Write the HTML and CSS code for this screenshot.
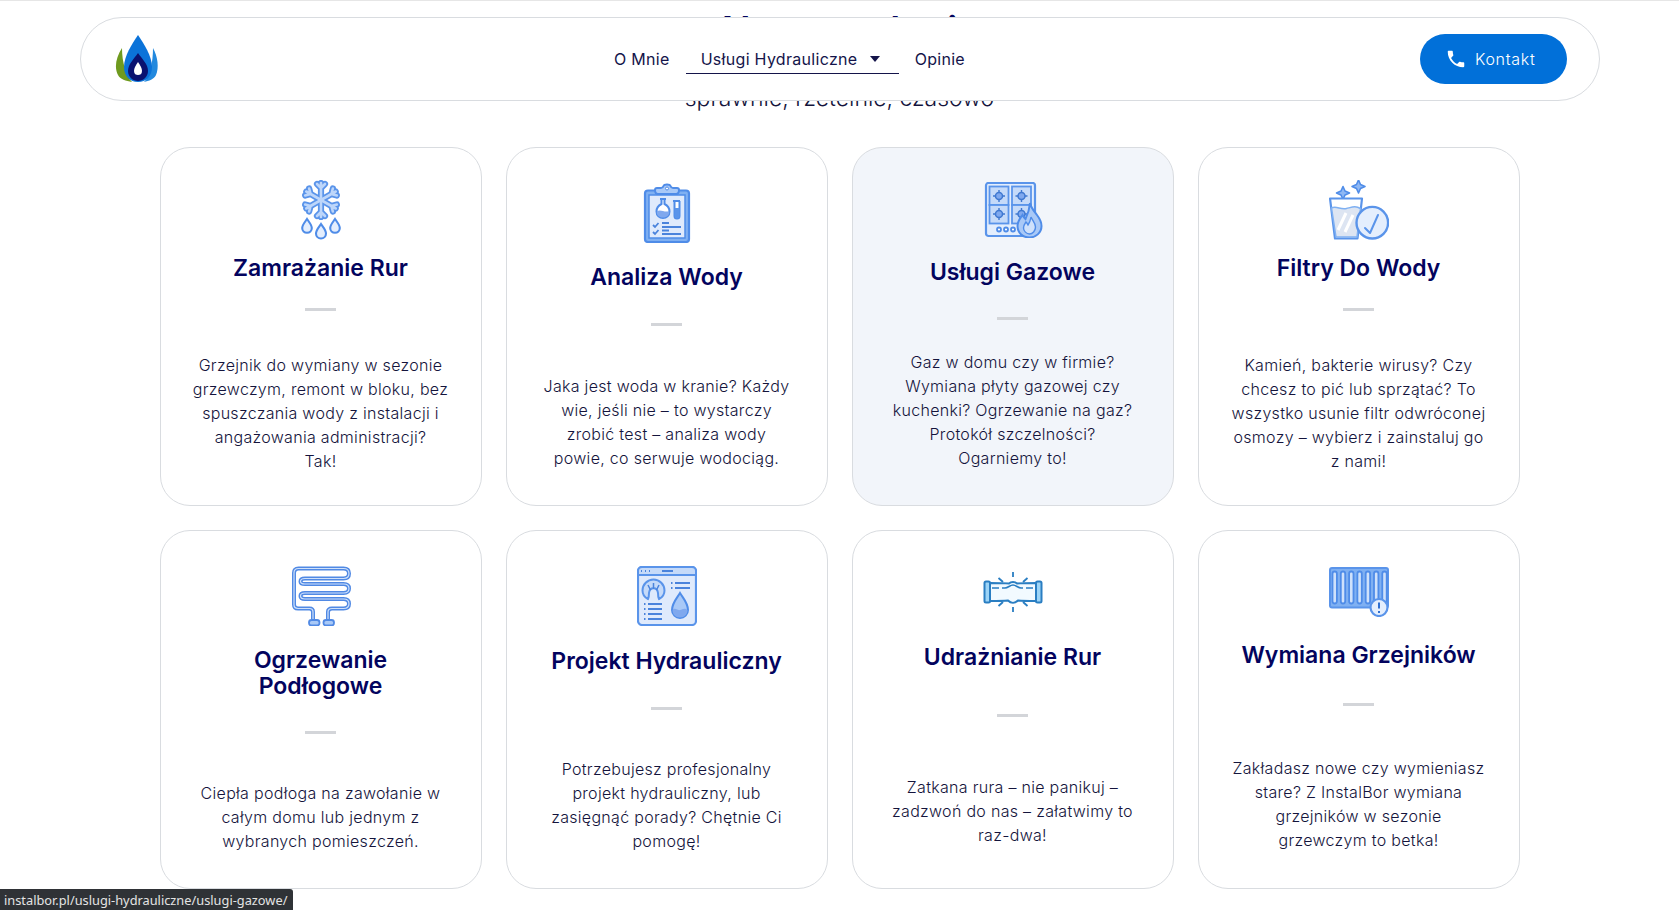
FILE: index.html
```html
<!DOCTYPE html>
<html lang="pl">
<head>
<meta charset="utf-8">
<title>Usługi Hydrauliczne</title>
<link rel="stylesheet" href="styles.css">
</head>
<body>
<header class="nav">
  <a class="logo" href="#" aria-label="InstalBor">
    <svg width="44" height="48" viewBox="-2 0 44 48">
      <path d="M5 13C-1 22-3 33 1 40c2 4 8 6 14 7-6-6-10-20-10-34z" fill="#6f9a1e"/>
      <path d="M36 13c5 9 6 20 3 27-2 4-7 6-12 7 6-6 9-20 9-34z" fill="#2389de"/>
      <path d="M21 0C15 9 7 21 7 32c0 9 6 15 14 15s14-6 14-15C35 21 27 9 21 0z" fill="#0b73d9"/>
      <path d="M21 18c-4 6-10 11-10 18 0 6 5 10 10 10s10-4 10-10c0-7-6-12-10-18z" fill="#0a1270"/>
      <path d="M21 27c-2 3-4 6-4 9 0 3 2 4 4 4s4-1 4-4c0-3-2-6-4-9z" fill="#fff"/>
    </svg>
  </a>
  <nav class="menu">
    <a class="menu-link" href="#">O Mnie</a>
    <a class="menu-link menu-link--open" href="#">Usługi Hydrauliczne<span class="caret"></span></a>
    <a class="menu-link" href="#">Opinie</a>
  </nav>
  <a class="cta" href="#">
    <svg width="22" height="22" viewBox="0 0 24 24"><path fill="#fff" d="M6.62 10.79c1.44 2.83 3.76 5.14 6.59 6.59l2.2-2.2c.27-.27.67-.36 1.02-.24 1.12.37 2.33.57 3.57.57.55 0 1 .45 1 1V20c0 .55-.45 1-1 1-9.39 0-17-7.61-17-17 0-.55.45-1 1-1h3.5c.55 0 1 .45 1 1 0 1.25.2 2.45.57 3.57.11.35.03.74-.25 1.02l-2.2 2.2z"/></svg>
    Kontakt
  </a>
</header>

<main class="page">
  <section class="hero">
    <h1 class="hero-title">Nasze usługi</h1>
    <p class="hero-sub">sprawnie, rzetelnie, czasowo</p>
  </section>

  <section class="grid">
    <article class="card c1">
      <svg class="icon" width="60" height="60" viewBox="0 0 60 60">
        <g fill="none" stroke-linecap="round" stroke-linejoin="round">
          <g stroke="#5a94ea" stroke-width="6.2">
            <path d="M30 20V3M30 8l-4-4M30 8l4-4"/>
            <path d="M30 20V3M30 8l-4-4M30 8l4-4" transform="rotate(60 30 20)"/>
            <path d="M30 20V3M30 8l-4-4M30 8l4-4" transform="rotate(120 30 20)"/>
            <path d="M30 20V3M30 8l-4-4M30 8l4-4" transform="rotate(180 30 20)"/>
            <path d="M30 20V3M30 8l-4-4M30 8l4-4" transform="rotate(240 30 20)"/>
            <path d="M30 20V3M30 8l-4-4M30 8l4-4" transform="rotate(300 30 20)"/>
          </g>
          <g stroke="#bdd6fa" stroke-width="2.6">
            <path d="M30 20V3M30 8l-4-4M30 8l4-4"/>
            <path d="M30 20V3M30 8l-4-4M30 8l4-4" transform="rotate(60 30 20)"/>
            <path d="M30 20V3M30 8l-4-4M30 8l4-4" transform="rotate(120 30 20)"/>
            <path d="M30 20V3M30 8l-4-4M30 8l4-4" transform="rotate(180 30 20)"/>
            <path d="M30 20V3M30 8l-4-4M30 8l4-4" transform="rotate(240 30 20)"/>
            <path d="M30 20V3M30 8l-4-4M30 8l4-4" transform="rotate(300 30 20)"/>
          </g>
        </g>
        <g fill="#e4eefd" stroke="#4f8ce8" stroke-width="2.1">
          <path d="M16 39c-2 3-4.800 6-4.800 9a4.800 4.800 0 0 0 9.600 0c0-3-2.800-6-4.800-9z"/>
          <path d="M30 44c-2 3-5 6-5 9.500a5 5 0 0 0 10 0c0-3.500-3-6.500-5-9.500z"/>
          <path d="M44 39c-2 3-4.800 6-4.800 9a4.800 4.800 0 0 0 9.600 0c0-3-2.800-6-4.800-9z"/>
        </g>
      </svg>
      <h2 class="card-title">Zamrażanie Rur</h2>
      <span class="rule"></span>
      <p class="card-text">Grzejnik do wymiany w sezonie<br>grzewczym, remont w bloku, bez<br>spuszczania wody z instalacji i<br>angażowania administracji?<br>Tak!</p>
    </article>

    <article class="card c2">
      <svg class="icon" width="60" height="60" viewBox="0 0 60 60">
        <rect x="8" y="7.500" width="44" height="51.500" rx="3" fill="#7fb0f2" stroke="#4f8ce8" stroke-width="2.200"/>
        <rect x="12" y="12" width="36" height="43" fill="#dfeafc" stroke="#4f8ce8" stroke-width="1.500"/>
        <path d="M18 7c0-1.500 1-2 2-2h4c1 0 2-.5 2.500-2 .8-2 6.200-2 7 0 .5 1.500 1.500 2 2.500 2h4c1 0 2 .5 2 2 0 2-1 4-3 4H21c-2 0-3-2-3-4z" fill="#a9c9f7" stroke="#4f8ce8" stroke-width="2"/>
        <circle cx="30" cy="5.500" r="1.500" fill="#fff" stroke="#4f8ce8"/>
        <path d="M23 16h6M24.500 16v5c-3 1.500-5 4-5 7.500 0 4 3 6.500 6.500 6.500s6.500-2.500 6.500-6.500c0-3.500-2-6-5-7.500v-5" fill="#fff" stroke="#4f8ce8" stroke-width="2"/>
        <path d="M20 28c4-2 8 2 12 0 1 4-2 6.500-6 6.500s-7-2.500-6-6.500z" fill="#7fa8ee"/>
        <path d="M36 18h7M37.500 18v15a2.500 2.500 0 0 0 5 0V18" fill="#fff" stroke="#4f8ce8" stroke-width="2"/>
        <path d="M37.500 25h5v8a2.500 2.500 0 0 1-5 0z" fill="#5a94ea"/>
        <path d="M16 42l2 2 3.500-4M16 49l2 2 3.500-4M25 40h7M25 44h19M25 47.500h7M25 51h19" fill="none" stroke="#4a83dc" stroke-width="1.800"/>
      </svg>
      <h2 class="card-title">Analiza Wody</h2>
      <span class="rule"></span>
      <p class="card-text">Jaka jest woda w kranie? Każdy<br>wie, jeśli nie – to wystarczy<br>zrobić test – analiza wody<br>powie, co serwuje wodociąg.</p>
    </article>

    <article class="card card--hover c3">
      <svg class="icon" width="60" height="56" viewBox="0 0 60 56">
        <rect x="3" y="1" width="49" height="53" rx="2.500" fill="#e4eefd" stroke="#5a94ea" stroke-width="2.200"/>
        <g fill="#c5daf9" stroke="#5a94ea" stroke-width="1.800">
          <rect x="6.500" y="4.500" width="19" height="18.500"/>
          <rect x="6.500" y="23" width="19" height="18.500"/>
          <rect x="29" y="4.500" width="19" height="18.500"/>
          <rect x="29" y="23" width="19" height="18.500"/>
        </g>
        <path d="M16 8v12M10 14h12M38.500 8v12M32.500 14h12M16 26v12M10 32h12M38.500 26v12M32.500 32h12" stroke="#3f78d0" stroke-width="1.400"/>
        <g fill="#7fa8ee" stroke="#3f78d0" stroke-width="1.500">
          <circle cx="16" cy="14" r="3.500"/>
          <circle cx="38.500" cy="14" r="3.500"/>
          <circle cx="16" cy="32" r="3.500"/>
          <circle cx="38.500" cy="32" r="3.500"/>
        </g>
        <g fill="#fff" stroke="#4f8ce8" stroke-width="1.800">
          <circle cx="16" cy="47.500" r="2"/>
          <circle cx="23" cy="47.500" r="2"/>
          <circle cx="30" cy="47.500" r="2"/>
        </g>
        <path d="M47 21c1 5 4 8 7 12 3 4 4.500 7 4.500 11 0 7-6 11.500-12 11.500-7 0-12-5-12-11.500 0-5 3-8 5-11 1 2 2 3 3 4 2-4 4-10 4.500-16z" fill="#a9c9f7" stroke="#4f8ce8" stroke-width="2"/>
        <path d="M48 35c1 3 4.500 6 4.500 10 0 4-3 7-6 7s-6-3-6-6c0-3 1.500-4.500 2.500-6 1 1 1.500 2 2 3 1.500-2 2.500-5 3-8z" fill="#cfe1fb" stroke="#4f8ce8" stroke-width="1.400"/>
      </svg>
      <h2 class="card-title">Usługi Gazowe</h2>
      <span class="rule"></span>
      <p class="card-text">Gaz w domu czy w firmie?<br>Wymiana płyty gazowej czy<br>kuchenki? Ogrzewanie na gaz?<br>Protokół szczelności?<br>Ogarniemy to!</p>
    </article>

    <article class="card c4">
      <svg class="icon" width="60" height="60" viewBox="0 0 60 60">
        <path d="M14 6.500l2 4.500 4.500 2-4.500 2-2 4.500-2-4.500-4.500-2 4.500-2zM29.500 0l2 4.500 4.500 2-4.500 2-2 4.500-2-4.500-4.500-2 4.500-2z" fill="#8fb8f4" stroke="#4f8ce8" stroke-width="1.600" stroke-linejoin="round"/>
        <path d="M1 18.500h32l-4.500 40H6z" fill="#fff" stroke="#5a94ea" stroke-width="2.200" stroke-linejoin="round"/>
        <path d="M2.500 28c5-2.500 9 2 15 .5s9-3 14 0L28 57H7z" fill="#dde5f2" stroke="#7fb0f2" stroke-width="1.500"/>
        <path d="M9 50l8-17M16 52l8-17" stroke="#fff" stroke-width="3"/>
        <circle cx="43.300" cy="42.700" r="15.800" fill="#e4eefd" stroke="#5a94ea" stroke-width="2.400"/>
        <path d="M36 48l5 5 8-18" fill="none" stroke="#5a94ea" stroke-width="2" stroke-linecap="round" stroke-linejoin="round"/>
      </svg>
      <h2 class="card-title">Filtry Do Wody</h2>
      <span class="rule"></span>
      <p class="card-text">Kamień, bakterie wirusy? Czy<br>chcesz to pić lub sprzątać? To<br>wszystko usunie filtr odwróconej<br>osmozy – wybierz i zainstaluj go<br>z nami!</p>
    </article>

    <article class="card c5">
      <svg class="icon" width="60" height="60" viewBox="0 0 60 60">
        <g fill="none" stroke-linejoin="round">
          <path stroke="#5089e4" stroke-width="4" d="M22 53V46Q22 42.500 18.500 42.500H7Q3 42.500 3 38.500V7Q3 2.500 7.500 2.500H52.500Q58 2.500 58 7.500Q58 12.500 52.500 12.500H14Q9.500 12.500 9.500 15.500Q9.500 18 14 18H52.500Q58 18 58 22.500Q58 27 52.500 27H14Q9.500 27 9.500 30Q9.500 33 14 33H52.500Q58 33 58 37.750Q58 42.500 52.500 42.500H41Q37 42.500 37 46V53"/>
          <path stroke="#cfe1fb" stroke-width="1.200" d="M22 53V46Q22 42.500 18.500 42.500H7Q3 42.500 3 38.500V7Q3 2.500 7.500 2.500H52.500Q58 2.500 58 7.500Q58 12.500 52.500 12.500H14Q9.500 12.500 9.500 15.500Q9.500 18 14 18H52.500Q58 18 58 22.500Q58 27 52.500 27H14Q9.500 27 9.500 30Q9.500 33 14 33H52.500Q58 33 58 37.750Q58 42.500 52.500 42.500H41Q37 42.500 37 46V53"/>
        </g>
        <rect x="18" y="54" width="10.500" height="5.500" rx="2.500" fill="#a9c9f7" stroke="#5089e4" stroke-width="1.800"/>
        <rect x="32.500" y="54" width="10.500" height="5.500" rx="2.500" fill="#a9c9f7" stroke="#5089e4" stroke-width="1.800"/>
      </svg>
      <h2 class="card-title">Ogrzewanie<br>Podłogowe</h2>
      <span class="rule"></span>
      <p class="card-text">Ciepła podłoga na zawołanie w<br>całym domu lub jednym z<br>wybranych pomieszczeń.</p>
    </article>

    <article class="card c6">
      <svg class="icon" width="60" height="60" viewBox="0 0 60 60">
        <rect x="1" y="1" width="58" height="58" rx="4" fill="#dfeafc" stroke="#5a94ea" stroke-width="2.200"/>
        <path d="M1 9V5a4 4 0 0 1 4-4h50a4 4 0 0 1 4 4v4z" fill="#c5daf9" stroke="#5a94ea" stroke-width="2"/>
        <path d="M4 5h1M8 5h1M12 5h1M25 5h11" stroke="#4a83dc" stroke-width="1.800"/>
        <path d="M11 33C7 31 5.500 28 5.500 24.500a11 11 0 0 1 22 0c0 3.500-1.500 6.500-5.500 8.500-1-2-1-5-1-6-.3-3-1.800-4.800-4.500-4.800S12.300 24 12 27c0 1 0 4-1 6z" fill="#c5daf9" stroke="#5a94ea" stroke-width="2"/>
        <path d="M16.500 17v6M11 19l2.500 5M22 19l-2.500 5" stroke="#4a83dc" stroke-width="1.500"/>
        <path d="M34 17h1.500M38 17h15M34 22h1.500M38 22h15M7 38h1.500M11 38h14M7 43h1.500M11 43h14M7 48h1.500M11 48h14M7 53h1.500M11 53h14" stroke="#4a83dc" stroke-width="1.800"/>
        <path d="M43 27c-3 5-8 10-8 17a8 8 0 0 0 16 0c0-7-5-12-8-17z" fill="#a9c9f7" stroke="#4f8ce8" stroke-width="2"/>
        <path d="M35.500 44c3-3 5 1 7.500 0s5-2.500 7.500 0c0 4-3 7.500-7.500 7.500s-7.500-3.500-7.500-7.500z" fill="#7fa8ee"/>
      </svg>
      <h2 class="card-title">Projekt Hydrauliczny</h2>
      <span class="rule"></span>
      <p class="card-text">Potrzebujesz profesjonalny<br>projekt hydrauliczny, lub<br>zasięgnąć porady? Chętnie Ci<br>pomogę!</p>
    </article>

    <article class="card c7">
      <svg class="icon" width="60" height="40" viewBox="0 0 60 40">
        <path d="M7 11c8 0 14 0 19 .5 2-2 6-2 8 0 5-.5 11-.5 19-.5v18c-8 0-13 0-18-.5-3 3-7 3-10 0-5 .5-10 .5-18 .5z" fill="#f2faff" stroke="#2a7ec2" stroke-width="2"/>
        <path d="M9 16h7M19 16h3c3 0 5-3 8-3s5 3 8 3h2M43 16h7" fill="none" stroke="#2a7ec2" stroke-width="1.600"/>
        <rect x="1.500" y="9.500" width="5.500" height="21" rx="1.500" fill="#9cd4f7" stroke="#2a7ec2" stroke-width="2"/>
        <rect x="53" y="9.500" width="5.500" height="21" rx="1.500" fill="#9cd4f7" stroke="#2a7ec2" stroke-width="2"/>
        <path d="M30 0v5M15.500 6l4.500 4M44.500 6l-4.500 4M30 35v5M15.500 34l4.500-4M44.500 34l-4.500-4" stroke="#2a7ec2" stroke-width="1.800"/>
      </svg>
      <h2 class="card-title">Udrażnianie Rur</h2>
      <span class="rule"></span>
      <p class="card-text">Zatkana rura – nie panikuj –<br>zadzwoń do nas – załatwimy to<br>raz-dwa!</p>
    </article>

    <article class="card c8">
      <svg class="icon" width="60" height="50" viewBox="0 0 60 50">
        <rect x="1" y="1" width="58" height="39.500" rx="2" fill="#7fb0f2" stroke="#5a94ea" stroke-width="2"/>
        <g fill="#cfe1fb" stroke="#4f8ce8" stroke-width="1.800">
          <rect x="3.500" y="4.500" width="4.400" height="32" rx="2.200"/>
          <rect x="11.800" y="4.500" width="4.400" height="32" rx="2.200"/>
          <rect x="20.100" y="4.500" width="4.400" height="32" rx="2.200"/>
          <rect x="28.400" y="4.500" width="4.400" height="32" rx="2.200"/>
          <rect x="36.700" y="4.500" width="4.400" height="32" rx="2.200"/>
          <rect x="45" y="4.500" width="4.400" height="32" rx="2.200"/>
          <rect x="53.300" y="4.500" width="4.400" height="32" rx="2.200"/>
        </g>
        <circle cx="50" cy="40.500" r="8.500" fill="#e4eefd" stroke="#5a94ea" stroke-width="2.200"/>
        <path d="M50 35.500v6M50 44v2" stroke="#2f6fd0" stroke-width="2"/>
      </svg>
      <h2 class="card-title">Wymiana Grzejników</h2>
      <span class="rule"></span>
      <p class="card-text">Zakładasz nowe czy wymieniasz<br>stare? Z InstalBor wymiana<br>grzejników w sezonie<br>grzewczym to betka!</p>
    </article>
  </section>
</main>

<div class="status">instalbor.pl/uslugi-hydrauliczne/uslugi-gazowe/</div>
</body>
</html>
```

FILE: styles.css
```css
* { box-sizing: border-box; }
html, body { margin: 0; height: 100%; overflow: hidden; }
body {
  border-top: 1px solid #e6e6e6;
  background: #fff;
  font-family: Inter, "Liberation Sans", sans-serif;
  color: #14143c;
}
a { text-decoration: none; color: inherit; }

.nav {
  position: absolute;
  top: 17px;
  left: 80px;
  right: 79px;
  height: 84px;
  z-index: 2;
  display: flex;
  align-items: center;
  justify-content: space-between;
  padding: 0 32px 0 34px;
  background: #fff;
  border: 1px solid #d9dce0;
  border-radius: 42px;
}
.logo { display: flex; }
.menu { display: flex; align-items: center; gap: 16px; }
.menu-link {
  display: flex;
  align-items: center;
  height: 30px;
  font-size: 16px;
  letter-spacing: 0.3px;
  color: #14144a;
}
.menu-link--open {
  width: 213px;
  padding-left: 15px;
  border-bottom: 1px solid #14144a;
}
.caret {
  margin-left: 13px;
  border-left: 5.5px solid transparent;
  border-right: 5.5px solid transparent;
  border-top: 6px solid #14144a;
}
.cta {
  display: flex;
  align-items: center;
  gap: 8px;
  width: 147px;
  height: 50px;
  padding-left: 25px;
  border-radius: 25px;
  background: #0170d9;
  color: #fff;
  font-size: 16px;
  letter-spacing: 0.7px;
  font-weight: 300;
}

.hero { text-align: center; height: 146px; }
.hero-title {
  margin: 0;
  height: 60px;
  font-size: 38px;
  line-height: 60px;
  font-weight: 600;
  color: #03045e;
  transform: translateY(-1px);
}
.hero-sub {
  margin: 21px 0 0;
  font-size: 23px;
  line-height: 32px;
  font-weight: 300;
}

.grid {
  width: 1360px;
  margin: 0 auto;
  display: grid;
  grid-template-columns: repeat(4, 1fr);
  grid-auto-rows: 359px;
  gap: 24px;
}
.card {
  display: flex;
  flex-direction: column;
  align-items: center;
  padding-top: var(--top);
  border: 1px solid #d9dce0;
  border-radius: 30px;
  background: #fff;
  text-align: center;
}
.card--hover { background: #f2f5fa; }
.icon { display: block; flex: none; }
.card-title {
  margin: var(--t) 0 0;
  font-size: 23px;
  line-height: 26px;
  font-weight: 600;
  color: #03045e;
}
.rule {
  flex: none;
  width: 31px;
  height: 3px;
  margin-top: var(--r);
  background: #d3d5d9;
}
.card-text {
  margin: var(--p) 0 0;
  font-size: 16px;
  line-height: 24px;
  font-weight: 300;
  letter-spacing: 0.3px;
  color: #14143c;
}
.c1, .c4 { --top: 32px; --t: 15px; --r: 27px; --p: 42px; }
.c2 { --top: 35px; --t: 21px; --r: 33px; --p: 48px; }
.c3 { --top: 34px; --t: 21px; --r: 32px; --p: 30px; }
.c5 { --top: 35px; --t: 21px; --r: 32px; --p: 47px; }
.c6 { --top: 35px; --t: 22px; --r: 33px; --p: 47px; }
.c7 { --top: 41px; --t: 32px; --r: 44px; --p: 58px; }
.c8 { --top: 36px; --t: 25px; --r: 35px; --p: 50px; }

.status {
  position: absolute;
  left: 0;
  bottom: 0;
  height: 21px;
  padding: 1px 6px 0 4px;
  border-top-right-radius: 3px;
  background: #2f3236;
  color: #e4e4e4;
  font-family: "Noto Sans", sans-serif;
  font-size: 12.8px;
  line-height: 20px;
}
```
